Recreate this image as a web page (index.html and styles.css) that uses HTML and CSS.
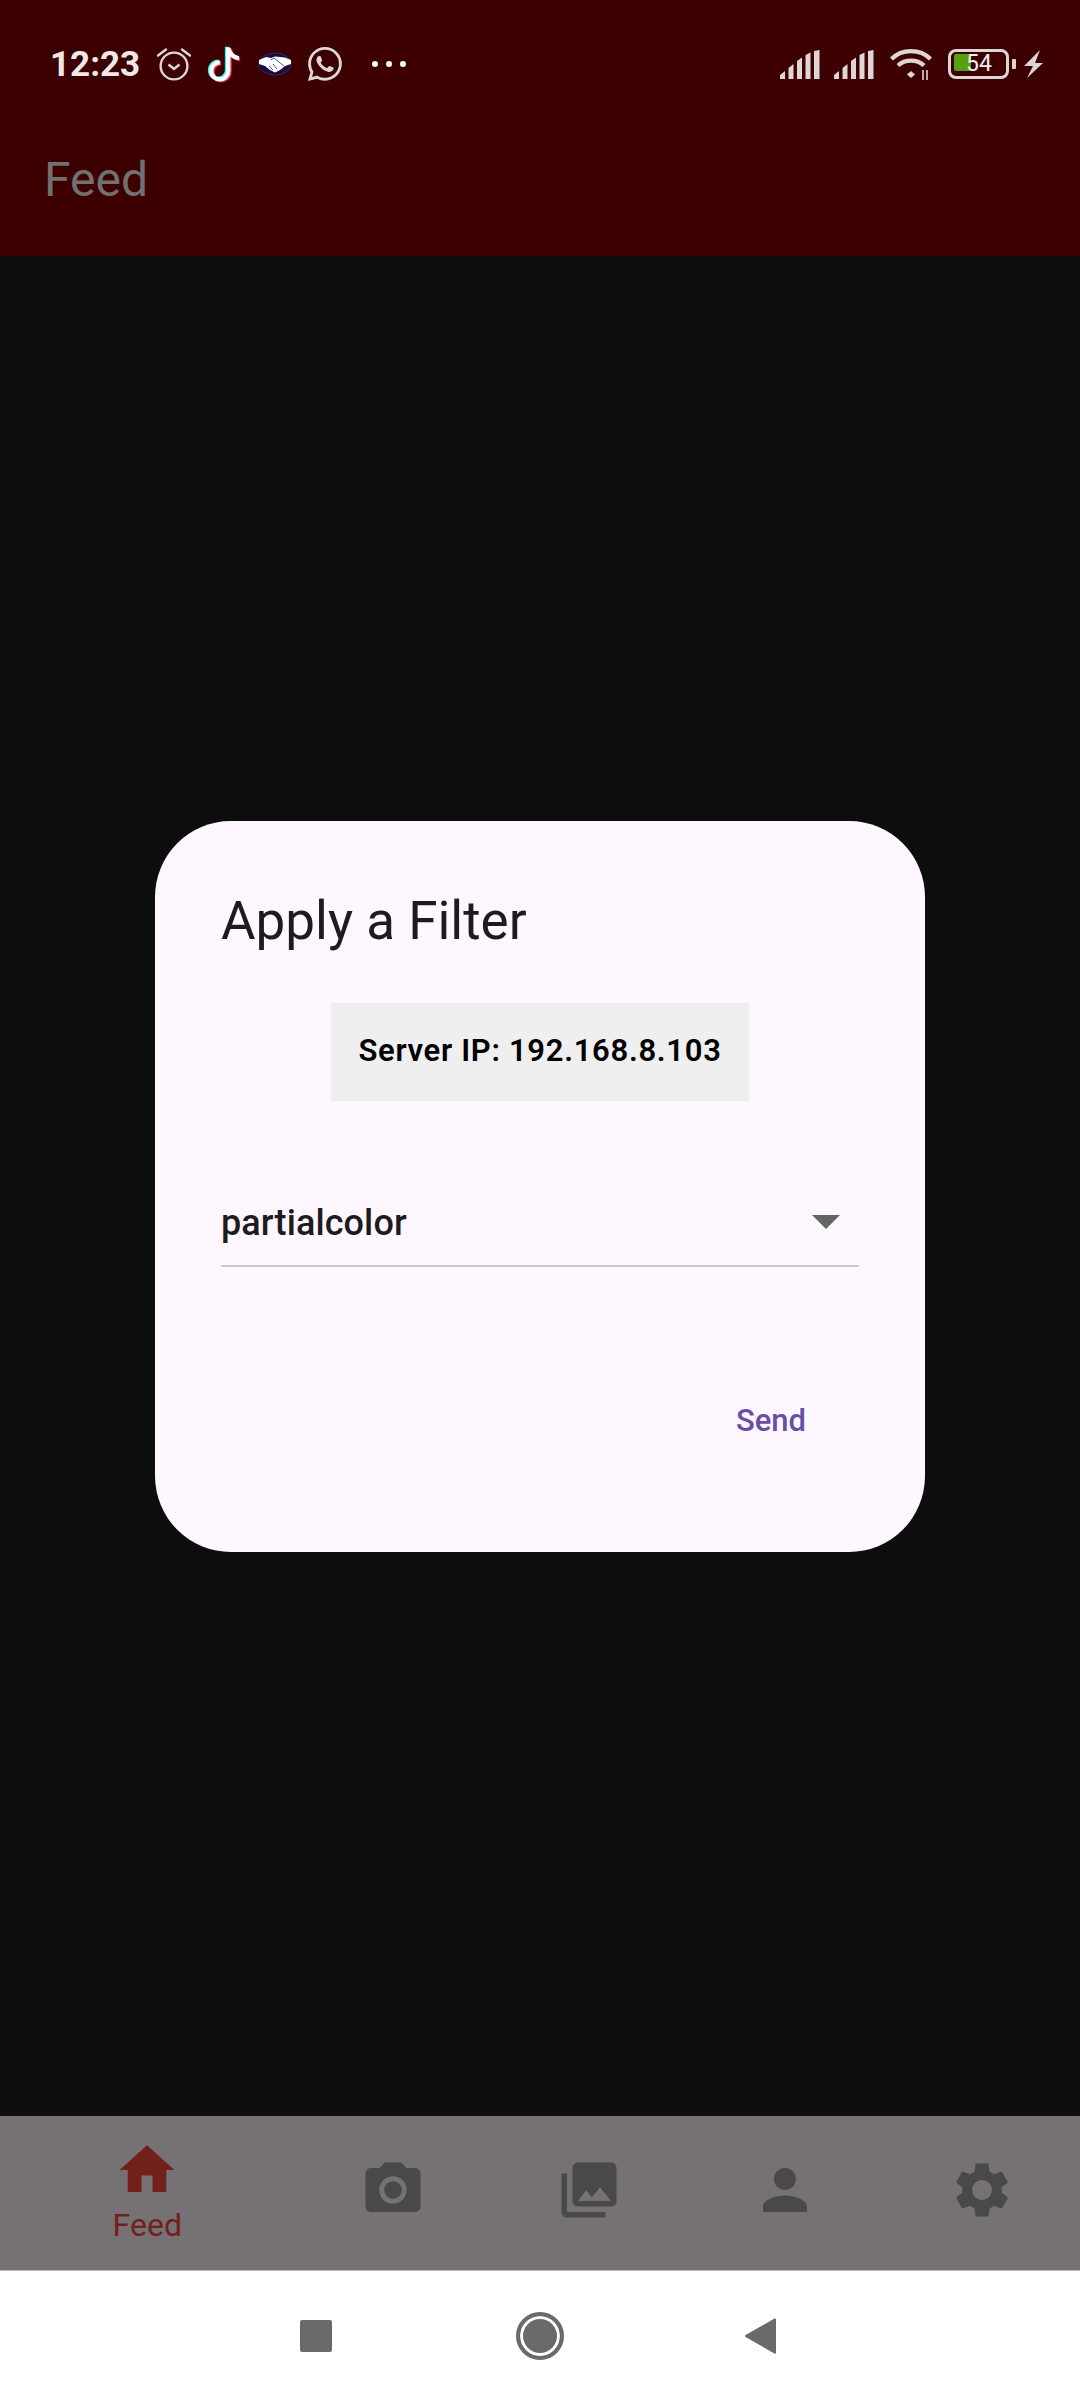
FILE: index.html
```html
<!DOCTYPE html>
<html lang="en">
<head>
    <meta charset="UTF-8">
    <title>Feed</title>
    <link rel="stylesheet" href="styles.css">
</head>
<body>
    <header class="top">
        <div class="status">
            <span class="clock">12:23</span>
            <svg class="ic-alarm" viewBox="0 0 34 34" fill="none" stroke="#e0d5d5" stroke-width="2.4">
                <circle cx="17" cy="19" r="13.4"/>
                <path d="M11.5 17.5l5.5 4.5 5.5-4.5"/>
                <path d="M1 8.5L9 2.5M33 8.5L25 2.5" stroke-linecap="round"/>
            </svg>
            <svg class="ic-tiktok" viewBox="0 0 16 16">
                <defs>
                    <path id="note" d="M9 0h1.98c.144.715.54 1.617 1.235 2.512C12.895 3.389 13.797 4 15 4v2c-1.753 0-3.07-.814-4-1.829V11a5 5 0 1 1-5-5v2a3 3 0 1 0 3 3V0Z"/>
                </defs>
                <use href="#note" fill="#25f4ee" x="-.6" y="-.4"/>
                <use href="#note" fill="#fe2c55" x=".6" y=".4"/>
                <use href="#note" fill="#fff"/>
            </svg>
            <svg class="ic-shake" viewBox="0 0 34 24">
                <ellipse cx="17" cy="12" rx="16.4" ry="11" fill="#1c0c3c" stroke="#2b2b78" stroke-width="1"/>
                <path d="M1 8L8 5L13 6L17 4.500L22 5L27 5.500L33 8V12L27 14L22 18L17 20.500L12 18L7 14L1 12Z" fill="#fff"/>
                <path d="M13 8l3-2 5 4 5 4M11 14l4 4M15 12l4 5" fill="none" stroke="#3c3c90" stroke-width=".9"/>
            </svg>
            <svg class="ic-whatsapp" viewBox="0 0 16 16" fill="#e0d5d5">
                <path d="M13.601 2.326A7.854 7.854 0 0 0 7.994 0C3.627 0 .068 3.558.064 7.926c0 1.399.366 2.76 1.057 3.965L0 16l4.204-1.102a7.933 7.933 0 0 0 3.79.965h.004c4.368 0 7.926-3.558 7.93-7.93A7.898 7.898 0 0 0 13.6 2.326zM7.994 14.521a6.573 6.573 0 0 1-3.356-.92l-.24-.144-2.494.654.666-2.433-.156-.251a6.56 6.56 0 0 1-1.007-3.505c0-3.626 2.957-6.584 6.591-6.584a6.56 6.56 0 0 1 4.66 1.931 6.557 6.557 0 0 1 1.928 4.66c-.004 3.639-2.961 6.592-6.592 6.592zm3.615-4.934c-.197-.099-1.17-.578-1.353-.646-.182-.065-.315-.099-.445.099-.133.197-.513.646-.627.775-.114.133-.232.148-.43.05-.197-.1-.836-.308-1.592-.985-.59-.525-.985-1.175-1.103-1.372-.114-.198-.011-.304.088-.403.087-.088.197-.232.296-.346.1-.114.133-.198.198-.33.065-.134.034-.248-.015-.347-.05-.099-.445-1.076-.612-1.47-.16-.389-.323-.335-.445-.34-.114-.007-.247-.007-.38-.007a.729.729 0 0 0-.529.247c-.182.198-.691.677-.691 1.654 0 .977.71 1.916.81 2.049.098.133 1.394 2.132 3.383 2.992.47.205.84.326 1.129.418.475.152.904.129 1.246.08.38-.058 1.171-.48 1.338-.943.164-.464.164-.86.114-.943-.049-.084-.182-.133-.38-.232z"/>
            </svg>
            <div class="dots"><i></i><i></i><i></i></div>

            <div class="status-right">
                <svg class="ic-signal" viewBox="0 0 40 29" fill="#e0d5d5">
                    <path d="M0 29V25L5 21V29ZM8.500 29V18L13.500 14V29ZM17 29V11L22 7.500V29ZM25.500 29V5L30.500 2.500V29ZM34 29V1L39.500 0V29Z"/>
                </svg>
                <svg class="ic-signal two" viewBox="0 0 40 29" fill="#e0d5d5">
                    <path d="M0 29V25L5 21V29ZM8.500 29V18L13.500 14V29ZM17 29V11L22 7.500V29ZM25.500 29V5L30.500 2.500V29ZM34 29V1L39.500 0V29Z"/>
                </svg>
                <svg class="ic-wifi" viewBox="0 0 42 31" fill="none" stroke="#e0d5d5" stroke-width="4.200">
                    <path d="M1.500 10C12 -.5 30 -.5 40.500 10"/>
                    <path d="M8 16.500C15 10 27 10 34 16.500"/>
                    <path d="M17 25.500l4-3.500 4 3.500-4 3.500z" fill="#e0d5d5" stroke="none"/>
                    <path d="M33 21v10M37 21v10" stroke-width="1.600"/>
                </svg>
                <div class="battery">
                    <div class="battery-fill"></div>
                    <span class="battery-num">54</span>
                </div>
                <div class="battery-nub"></div>
                <svg class="ic-bolt" viewBox="0 0 19 28" fill="#e0d5d5">
                    <path d="M16 0L0 16H9L3 28L19 13H11Z"/>
                </svg>
            </div>
        </div>
        <div class="appbar">Feed</div>
    </header>

    <main class="content">
        <section class="dialog">
            <h2 class="dialog-title">Apply a Filter</h2>
            <div class="server">Server IP: 192.168.8.103</div>
            <div class="select">
                <span>partialcolor</span>
                <i class="caret"></i>
            </div>
            <div class="actions">
                <span class="send">Send</span>
            </div>
        </section>
    </main>

    <nav class="tabs">
        <div class="tab active">
            <svg viewBox="0 0 24 24"><path d="M10 20v-6h4v6h5v-8h3L12 3 2 12h3v8z"/></svg>
            <span>Feed</span>
        </div>
        <div class="tab">
            <svg viewBox="0 0 24 24"><circle cx="12" cy="12" r="3.2"/><path d="M9 2L7.170 4H4c-1.100 0-2 .9-2 2v12c0 1.100.9 2 2 2h16c1.100 0 2-.9 2-2V6c0-1.100-.9-2-2-2h-3.170L15 2H9zm3 15c-2.760 0-5-2.240-5-5s2.240-5 5-5 5 2.240 5 5-2.240 5-5 5z"/></svg>
        </div>
        <div class="tab">
            <svg viewBox="0 0 24 24"><path d="M22 16V4c0-1.100-.9-2-2-2H8c-1.100 0-2 .9-2 2v12c0 1.100.9 2 2 2h12c1.100 0 2-.9 2-2zm-11-4l2.030 2.710L16 11l4 5H8l3-4zM2 6v14c0 1.100.9 2 2 2h14v-2H4V6H2z"/></svg>
        </div>
        <div class="tab">
            <svg viewBox="0 0 24 24"><path d="M12 12c2.210 0 4-1.790 4-4s-1.790-4-4-4-4 1.790-4 4 1.790 4 4 4zm0 2c-2.670 0-8 1.340-8 4v2h16v-2c0-2.660-5.330-4-8-4z"/></svg>
        </div>
        <div class="tab">
            <svg viewBox="0 0 24 24"><path d="M19.140 12.940c.04-.3.06-.61.06-.94 0-.32-.02-.64-.07-.94l2.030-1.580c.18-.14.23-.41.12-.61l-1.920-3.320c-.12-.22-.37-.29-.59-.22l-2.390.96c-.5-.38-1.030-.7-1.620-.94l-.36-2.540c-.04-.24-.24-.41-.48-.41h-3.840c-.24 0-.43.17-.47.41l-.36 2.540c-.59.24-1.130.57-1.620.94l-2.390-.96c-.22-.08-.47 0-.59.22L2.740 8.870c-.12.21-.08.47.12.61l2.030 1.580c-.05.3-.09.63-.09.94s.02.64.07.94l-2.030 1.580c-.18.14-.23.41-.12.61l1.920 3.320c.12.22.37.29.59.22l2.390-.96c.5.38 1.030.7 1.620.94l.36 2.540c.05.24.24.41.48.41h3.840c.24 0 .44-.17.47-.41l.36-2.540c.59-.24 1.130-.56 1.620-.94l2.390.96c.22.08.47 0 .59-.22l1.920-3.320c.12-.22.07-.47-.12-.61l-2.010-1.580zM12 15.600c-1.980 0-3.600-1.620-3.600-3.600s1.620-3.600 3.600-3.600 3.600 1.620 3.600 3.600-1.620 3.600-3.600 3.600z"/></svg>
        </div>
    </nav>

    <footer class="sysnav">
        <i class="sys-square"></i>
        <i class="sys-home"></i>
        <svg class="sys-back" viewBox="0 0 31 36"><path d="M30 .5c.6 0 1 .4 1 1V35c0 .6-.6 1-1.200.7L.6 19c-.8-.4-.8-1.500 0-2L29.500.6z"/></svg>
    </footer>
</body>
</html>
```

FILE: styles.css
```css
* {
    box-sizing: border-box;
}
html, body {
    margin: 0;
    height: 2400px;
}
body {
    display: flex;
    flex-direction: column;
    width: 1080px;
    background: #0d0d0d;
    font-family: Roboto, "Noto Sans", sans-serif;
}

/* status bar + app bar */
.top {
    height: 256px;
    background: #3c0000;
}
.status {
    display: flex;
    align-items: center;
    height: 128px;
    padding: 0 37px 0 50px;
}
.clock {
    width: 107px;
    color: #f0e8e8;
    font-size: 35px;
    font-weight: 700;
}
.ic-alarm {
    width: 34px;
    height: 34px;
}
.ic-tiktok {
    width: 34px;
    height: 37px;
    margin-left: 16px;
}
.ic-shake {
    width: 34px;
    height: 24px;
    margin-left: 17px;
}
.ic-whatsapp {
    width: 34px;
    height: 34px;
    margin-left: 16px;
}
.dots {
    display: flex;
    gap: 8px;
    margin-left: 30px;
}
.dots i {
    width: 6px;
    height: 6px;
    border-radius: 50%;
    background: #fff;
}
.status-right {
    display: flex;
    align-items: center;
    margin-left: auto;
}
.ic-signal {
    width: 40px;
    height: 29px;
}
.ic-signal.two {
    margin-left: 14px;
}
.ic-wifi {
    width: 42px;
    height: 31px;
    margin-left: 16px;
}
.battery {
    display: flex;
    align-items: center;
    justify-content: center;
    position: relative;
    width: 61px;
    height: 30px;
    margin-left: 16px;
    border: 3.5px solid #e0d5d5;
    border-radius: 8px;
}
.battery-fill {
    position: absolute;
    left: 3px;
    top: 2px;
    width: 17px;
    height: 17px;
    background: #57a00f;
    border-radius: 2px;
}
.battery-num {
    position: relative;
    color: #f2eeee;
    font-size: 23px;
    line-height: 20px;
    margin-left: 1px;
}
.battery-nub {
    width: 4px;
    height: 10px;
    margin-left: 3px;
    background: #e0d5d5;
    border-radius: 1px;
}
.ic-bolt {
    width: 19px;
    height: 28px;
    margin-left: 8px;
}
.appbar {
    display: flex;
    align-items: center;
    height: 128px;
    padding: 0 0 26px 44px;
    color: #717171;
    font-size: 48px;
}

/* dialog */
.content {
    flex: 1;
    display: flex;
    align-items: center;
    justify-content: center;
}
.dialog {
    width: 770px;
    padding: 68px 66px 111px 66px;
    background: #fef7ff;
    border-radius: 76px;
}
.dialog-title {
    height: 64px;
    margin: 0 0 50px;
    color: #1d1b20;
    font-size: 53px;
    font-weight: 400;
    line-height: 64px;
}
.server {
    display: flex;
    align-items: center;
    justify-content: center;
    width: 418px;
    height: 98px;
    margin: 0 auto;
    padding-bottom: 2px;
    background: #eeefee;
    color: #000;
    font-size: 31px;
    font-weight: 600;
    letter-spacing: .7px;
}
.select {
    display: flex;
    align-items: center;
    justify-content: space-between;
    height: 104px;
    margin-top: 62px;
    padding: 18px 19px 0 0;
    border-bottom: 2px solid #cfc9d2;
    color: #1d1b20;
    font-size: 36px;
    font-weight: 500;
    letter-spacing: .1px;
}
.caret {
    width: 0;
    height: 0;
    margin-top: -2px;
    border-left: 14px solid transparent;
    border-right: 14px solid transparent;
    border-top: 14px solid #646464;
}
.actions {
    display: flex;
    justify-content: flex-end;
    margin-top: 134px;
    padding-right: 53px;
}
.send {
    color: #6750a4;
    font-size: 31px;
    font-weight: 500;
    line-height: 40px;
}

/* bottom nav */
.tabs {
    display: flex;
    height: 155px;
    padding-bottom: 7px;
    background: #767175;
    border-bottom: 1px solid #bdb8bb;
}
.tab {
    flex: 1;
    display: flex;
    flex-direction: column;
    align-items: center;
    justify-content: center;
}
.tab svg {
    width: 66px;
    height: 66px;
    fill: #49494a;
}
.tab.active {
    flex: 1.5;
    color: #72201a;
    font-size: 32px;
    line-height: 39px;
}
.tab.active span {
    margin: 3px 0 -3px;
}
.tab.active svg {
    fill: #72201a;
}

/* system nav */
.sysnav {
    display: flex;
    align-items: center;
    height: 129px;
    padding-left: 300px;
    background: #fff;
}
.sys-square {
    width: 32px;
    height: 32px;
    background: #6a6a6a;
    border-radius: 2px;
}
.sys-home {
    display: flex;
    width: 48px;
    height: 48px;
    margin-left: 184px;
    border: 4px solid #6a6a6a;
    border-radius: 50%;
    background: #6a6a6a;
    box-shadow: inset 0 0 0 3px #fff;
}
.sys-back {
    width: 31px;
    height: 36px;
    margin-left: 181px;
    fill: #6a6a6a;
}
```
